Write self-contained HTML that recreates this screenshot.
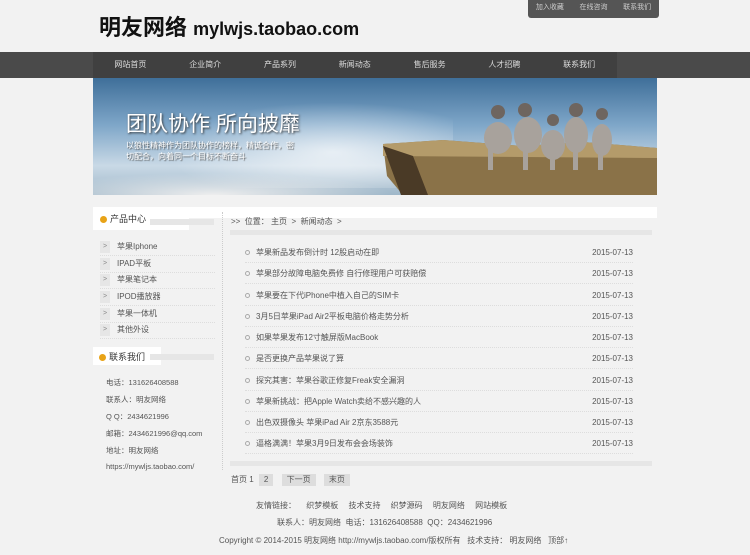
<!DOCTYPE html>
<html><head><meta charset="utf-8"><style>
*{margin:0;padding:0;box-sizing:border-box}
body{width:750px;height:555px;background:#f2f2f2;font-family:"Liberation Sans","Noto Sans CJK SC",sans-serif;font-size:8px;color:#555;position:relative;overflow:hidden}
.a{position:absolute}
.top{left:528px;top:0;width:131px;height:18px;background:#555;border-radius:0 0 3px 3px;color:#ccc;font-size:7px;line-height:16px;display:flex;justify-content:space-around}
.logo{left:99px;top:10px;font-size:22px;font-weight:bold;color:#111}
.logo span{font-size:18px;font-weight:bold;font-family:"Liberation Sans",sans-serif}
.nav{left:0;top:52px;width:750px;height:26px;background:#4a4a4a}
.navin{left:93px;top:52px;width:524px;height:26px;background:#404040;display:flex;color:#ddd;font-size:8px;line-height:26px}
.navin div{width:74.8px;text-align:center}
.ban{left:93px;top:78px;width:564px;height:117px;background:linear-gradient(180deg,#3f6f99 0%,#7ea6c8 40%,#c9d9e6 75%,#9fb7c9 100%);overflow:hidden}
.row{left:245px;width:388px;height:21px;line-height:21px;border-bottom:1px dotted #ddd;color:#555}
.row i{display:inline-block;width:5px;height:5px;border:1px solid #aaa;border-radius:50%;margin-right:6px;vertical-align:middle}
.row b{float:right;font-weight:normal}
.li{left:100px;width:115px;height:17px;line-height:16px;border-bottom:1px dotted #ddd}
.li i{display:inline-block;width:10px;height:12px;background:#e6e6e6;color:#888;font-style:normal;font-size:7px;text-align:center;line-height:12px;margin-right:7px;vertical-align:middle}
.ct{left:106px;font-size:7.5px}
.pg{display:inline-block;background:#ddd;padding:0 5px;height:12px;line-height:12px;margin-left:3px}
</style></head><body>
<div class="a top"><span>加入收藏</span><span>在线咨询</span><span>联系我们</span></div>
<div class="a logo">明友网络 <span>mylwjs.taobao.com</span></div>
<div class="a nav"></div>
<div class="a navin"><div>网站首页</div><div>企业简介</div><div>产品系列</div><div>新闻动态</div><div>售后服务</div><div>人才招聘</div><div>联系我们</div></div>
<div class="a ban">
<div class="a" style="left:60px;top:20px;width:300px;height:90px;background:radial-gradient(ellipse at 60% 60%,rgba(255,255,255,.7) 0%,transparent 65%)"></div>
<div class="a" style="left:0;top:95px;width:300px;height:22px;background:radial-gradient(ellipse at 40% 100%,#eee 0%,transparent 70%)"></div>
<svg class="a" style="left:290px;top:58px" width="274" height="59"><path d="M0 8 L60 4 L140 10 L200 6 L274 12 L274 59 L20 59 L4 40 Z" fill="#8a7248"/><path d="M0 8 L60 4 L140 10 L200 6 L274 12 L274 22 L0 20Z" fill="#b49b6a"/><path d="M0 10 L30 20 L45 59 L18 59Z" fill="#4a3a26"/></svg>
<svg class="a" style="left:385px;top:22px" width="140" height="72"><g fill="#a8a29c"><ellipse cx="20" cy="38" rx="14" ry="16"/><ellipse cx="50" cy="35" rx="14" ry="18"/><ellipse cx="75" cy="45" rx="12" ry="15"/><ellipse cx="98" cy="35" rx="12" ry="18"/><ellipse cx="124" cy="40" rx="10" ry="16"/><rect x="10" y="40" width="5" height="30"/><rect x="45" y="40" width="5" height="30"/><rect x="72" y="45" width="5" height="25"/><rect x="95" y="45" width="5" height="25"/><rect x="120" y="45" width="5" height="25"/></g><g fill="#6e655f"><circle cx="20" cy="12" r="7"/><circle cx="47" cy="10" r="7"/><circle cx="75" cy="20" r="6"/><circle cx="98" cy="10" r="7"/><circle cx="124" cy="14" r="6"/></g></svg>
<div class="a" style="left:33px;top:30px;font-size:21px;color:#fff;text-shadow:1px 1px 2px #333">团队协作 所向披靡</div>
<div class="a" style="left:33px;top:62px;font-size:8px;color:#fff;width:170px;line-height:11px;text-shadow:1px 1px 1px #555">以狼性精神作为团队协作的榜样，精诚合作，密切配合，向着同一个目标不断奋斗</div>
</div>
<div class="a" style="left:93px;top:207px;width:564px;height:11px;background:#fff"></div>
<div class="a" style="left:93px;top:207px;width:96px;height:23px;background:#fff"></div>
<div class="a" style="left:100px;top:212px;font-size:9px;color:#333"><span style="display:inline-block;width:7px;height:7px;border-radius:50%;background:#e8a317;vertical-align:middle;margin-right:3px"></span>产品中心</div>
<div class="a" style="left:150px;top:219px;width:64px;height:6px;background:#e6e6e6"></div>
<div class="a" style="left:222px;top:212px;height:258px;border-left:1px dotted #ccc"></div>
<div class="a" style="left:231px;top:216px;color:#555">&gt;&gt;&nbsp; 位置： 主页 &nbsp;&gt;&nbsp; 新闻动态 &nbsp;&gt;</div>
<div class="a" style="left:230px;top:230px;width:422px;height:5px;background:#e6e6e6"></div>
<div class="a li" style="top:239px"><i>&gt;</i>苹果Iphone</div>
<div class="a li" style="top:256px"><i>&gt;</i>IPAD平板</div>
<div class="a li" style="top:272px"><i>&gt;</i>苹果笔记本</div>
<div class="a li" style="top:289px"><i>&gt;</i>IPOD播放器</div>
<div class="a li" style="top:306px"><i>&gt;</i>苹果一体机</div>
<div class="a li" style="top:322px"><i>&gt;</i>其他外设</div>
<div class="a" style="left:93px;top:347px;width:68px;height:18px;background:#fff"></div>
<div class="a" style="left:99px;top:350px;font-size:9px;color:#333"><span style="display:inline-block;width:7px;height:7px;border-radius:50%;background:#e8a317;vertical-align:middle;margin-right:3px"></span>联系我们</div>
<div class="a" style="left:150px;top:354px;width:64px;height:6px;background:#e6e6e6"></div>
<div class="a ct" style="top:377px">电话：131626408588</div>
<div class="a ct" style="top:394px">联系人：明友网络</div>
<div class="a ct" style="top:411px">Q Q：2434621996</div>
<div class="a ct" style="top:428px">邮箱：2434621996@qq.com</div>
<div class="a ct" style="top:445px">地址：明友网络</div>
<div class="a ct" style="top:462px">https://mywljs.taobao.com/</div>
<div class="a row" style="top:242px"><i></i>苹果新品发布倒计时 12股启动在即<b>2015-07-13</b></div>
<div class="a row" style="top:263px"><i></i>苹果部分故障电脑免费修 自行修理用户可获赔偿<b>2015-07-13</b></div>
<div class="a row" style="top:285px"><i></i>苹果要在下代iPhone中植入自己的SIM卡<b>2015-07-13</b></div>
<div class="a row" style="top:306px"><i></i>3月5日苹果iPad Air2平板电脑价格走势分析<b>2015-07-13</b></div>
<div class="a row" style="top:327px"><i></i>如果苹果发布12寸触屏版MacBook<b>2015-07-13</b></div>
<div class="a row" style="top:348px"><i></i>是否更换产品苹果说了算<b>2015-07-13</b></div>
<div class="a row" style="top:370px"><i></i>探究其害：苹果谷歌正修复Freak安全漏洞<b>2015-07-13</b></div>
<div class="a row" style="top:391px"><i></i>苹果新挑战：把Apple Watch卖给不感兴趣的人<b>2015-07-13</b></div>
<div class="a row" style="top:412px"><i></i>出色双摄像头 苹果iPad Air 2京东3588元<b>2015-07-13</b></div>
<div class="a row" style="top:433px"><i></i>逼格满满！苹果3月9日发布会会场装饰<b>2015-07-13</b></div>
<div class="a" style="left:230px;top:461px;width:422px;height:5px;background:#e6e6e6"></div>
<div class="a" style="left:231px;top:474px">首页 1 <span class="pg">2</span> <span class="pg" style="margin-left:6px">下一页</span> <span class="pg" style="margin-left:6px">末页</span></div>
<div class="a" style="left:256px;top:500px;word-spacing:8px">友情链接： 织梦模板 技术支持 织梦源码 明友网络 网站模板</div>
<div class="a" style="left:277px;top:517px">联系人：明友网络 &nbsp;电话：131626408588 &nbsp;QQ：2434621996</div>
<div class="a" style="left:219px;top:535px">Copyright © 2014-2015 明友网络 http://mywljs.taobao.com/版权所有 &nbsp; 技术支持： 明友网络 &nbsp; 顶部↑</div>
</body></html>
